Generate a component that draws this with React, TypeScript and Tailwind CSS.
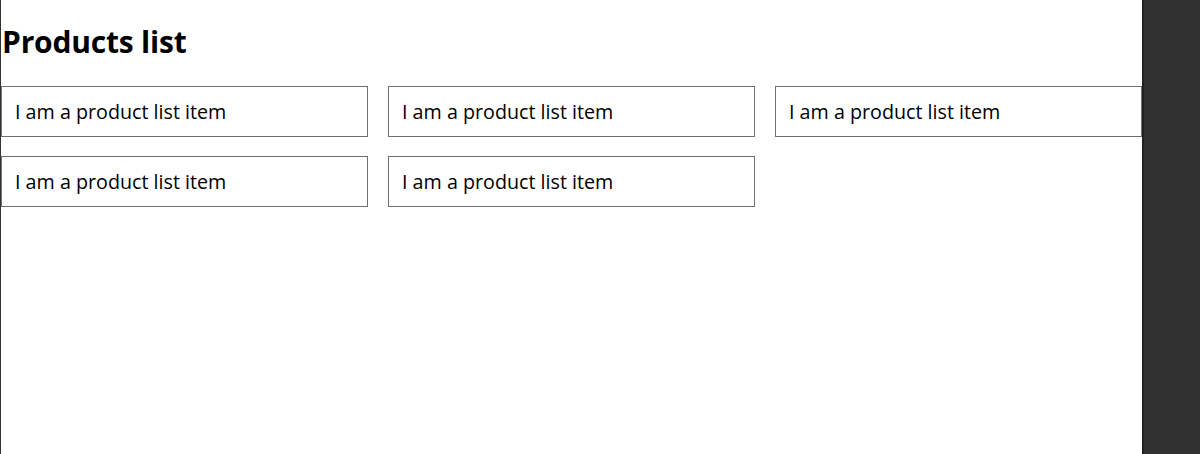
export default function App() {
  const items = Array.from({ length: 5 }, () => 'I am a product list item');

  return (
    <div className="flex h-[454px] w-[1200px] overflow-hidden bg-white font-['Open_Sans',sans-serif] text-black">
      {/* Page */}
      <div className="w-[1142px] shrink-0 border-l border-[#333]">
        <h1 className="pt-[23px] pl-[1px] text-[30px] font-bold leading-[38px] tracking-[-0.2px]">Products list</h1>
        <ul className="mt-[25px] grid grid-cols-[367px_367px_367px] gap-x-5 gap-y-[19px]">
          {items.map((label, i) => (
            <li
              key={i}
              className="flex h-[51px] items-center border border-[#707070] pl-[13px] text-[19.7px]"
            >
              {label}
            </li>
          ))}
        </ul>
      </div>

      {/* Side panel */}
      <div className="flex-1 border-l-2 border-[#222] bg-[#323131]" />
    </div>
  );
}
